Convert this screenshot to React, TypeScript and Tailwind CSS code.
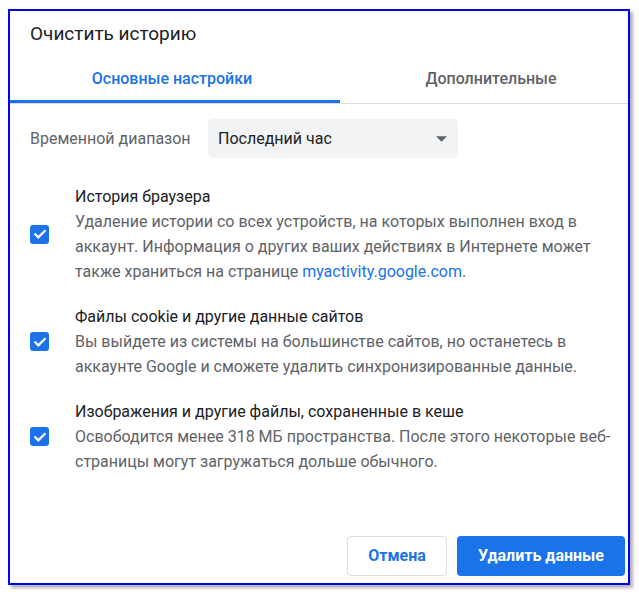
import { useState } from 'react';

const items = [
  {
    title: 'История браузера',
    desc: (
      <>
        Удаление истории со всех устройств, на которых выполнен вход в аккаунт. Информация о других ваших
        действиях в Интернете может также храниться на странице{' '}
        <span className="text-[#1a73e8]">myactivity.google.com</span>.
      </>
    ),
  },
  {
    title: 'Файлы cookie и другие данные сайтов',
    desc: 'Вы выйдете из системы на большинстве сайтов, но останетесь в аккаунте Google и сможете удалить синхронизированные данные.',
  },
  {
    title: 'Изображения и другие файлы, сохраненные в кеше',
    desc: 'Освободится менее 318 МБ пространства. После этого некоторые веб-страницы могут загружаться дольше обычного.',
  },
];

function CheckBox() {
  return (
    <div className="w-[19px] h-[19px] rounded-[3px] bg-[#1a73e8] flex items-center justify-center shrink-0">
      <svg viewBox="0 0 24 24" className="w-[16px] h-[16px]" fill="none" stroke="white" strokeWidth="3.4" strokeLinecap="square">
        <path d="M5 12.5l4.5 4.5L19 7.5" />
      </svg>
    </div>
  );
}

export default function App() {
  const [tab, setTab] = useState(0);

  return (
    <div className="w-[639px] h-[594px] bg-white pl-[8px] pt-[9px]" style={{ fontFamily: 'Roboto, "Noto Sans", sans-serif' }}>
      <div className="w-[622px] h-[576px] border-2 border-[#0000ff] bg-white flex flex-col shadow-[3px_3px_3px_rgba(0,0,0,0.3)]">
        <div className="pl-[20px] pt-[11px] h-[44px] text-[19px] leading-[24px] text-[#202124]">Очистить историю</div>

        <div className="flex border-b border-[#dadce0]">
          {['Основные настройки', 'Дополнительные'].map((t, i) => (
            <button
              key={t}
              onClick={() => setTab(i)}
              className={'flex flex-col ' + (i === 0 ? 'w-[330px]' : 'flex-1')}
            >
              <span
                className={
                  'h-[45px] pt-[2px] flex items-center justify-center text-[16px] font-medium ' +
                  (i === 0 ? 'pr-[6px] ' : 'pl-[14px] ') +
                  (tab === i ? 'text-[#1a73e8]' : 'text-[#5f6368]')
                }
              >
                {t}
              </span>
              <span className={'h-[3px] w-full ' + (tab === i ? 'bg-[#1a73e8]' : 'bg-transparent')} />
            </button>
          ))}
        </div>

        <div className="flex items-center pl-[20px] mt-[15px]">
          <span className="w-[178px] text-[16px] text-[#5f6368]">Временной диапазон</span>
          <div className="w-[250px] h-[39px] rounded-[5px] bg-[#f1f3f4] flex items-center justify-between pl-[10px] pr-[11px]">
            <span className="text-[16px] text-[#202124]">Последний час</span>
            <svg viewBox="0 0 10 5" className="w-[11px] h-[6px]">
              <path d="M0 0h10L5 5z" fill="#5f6368" />
            </svg>
          </div>
        </div>

        <div className="flex flex-col gap-[20px] mt-[26px] pr-[8px]">
          {items.map((it) => (
            <div key={it.title} className="flex items-center pl-[20px]">
              <CheckBox />
              <div className="ml-[26px] text-[16px] leading-[25px]">
                <div className="text-[#202124]">{it.title}</div>
                <div className="text-[#5f6368]">{it.desc}</div>
              </div>
            </div>
          ))}
        </div>

        <div className="mt-auto flex justify-end gap-[10px] pr-[3px] pb-[7px]">
          <button className="w-[100px] h-[40px] rounded-[4px] border border-[#dadce0] bg-white text-[16px] font-bold text-[#1a73e8]">
            Отмена
          </button>
          <button className="w-[168px] h-[40px] rounded-[4px] bg-[#1a73e8] text-[16px] font-bold text-white">
            Удалить данные
          </button>
        </div>
      </div>
    </div>
  );
}
